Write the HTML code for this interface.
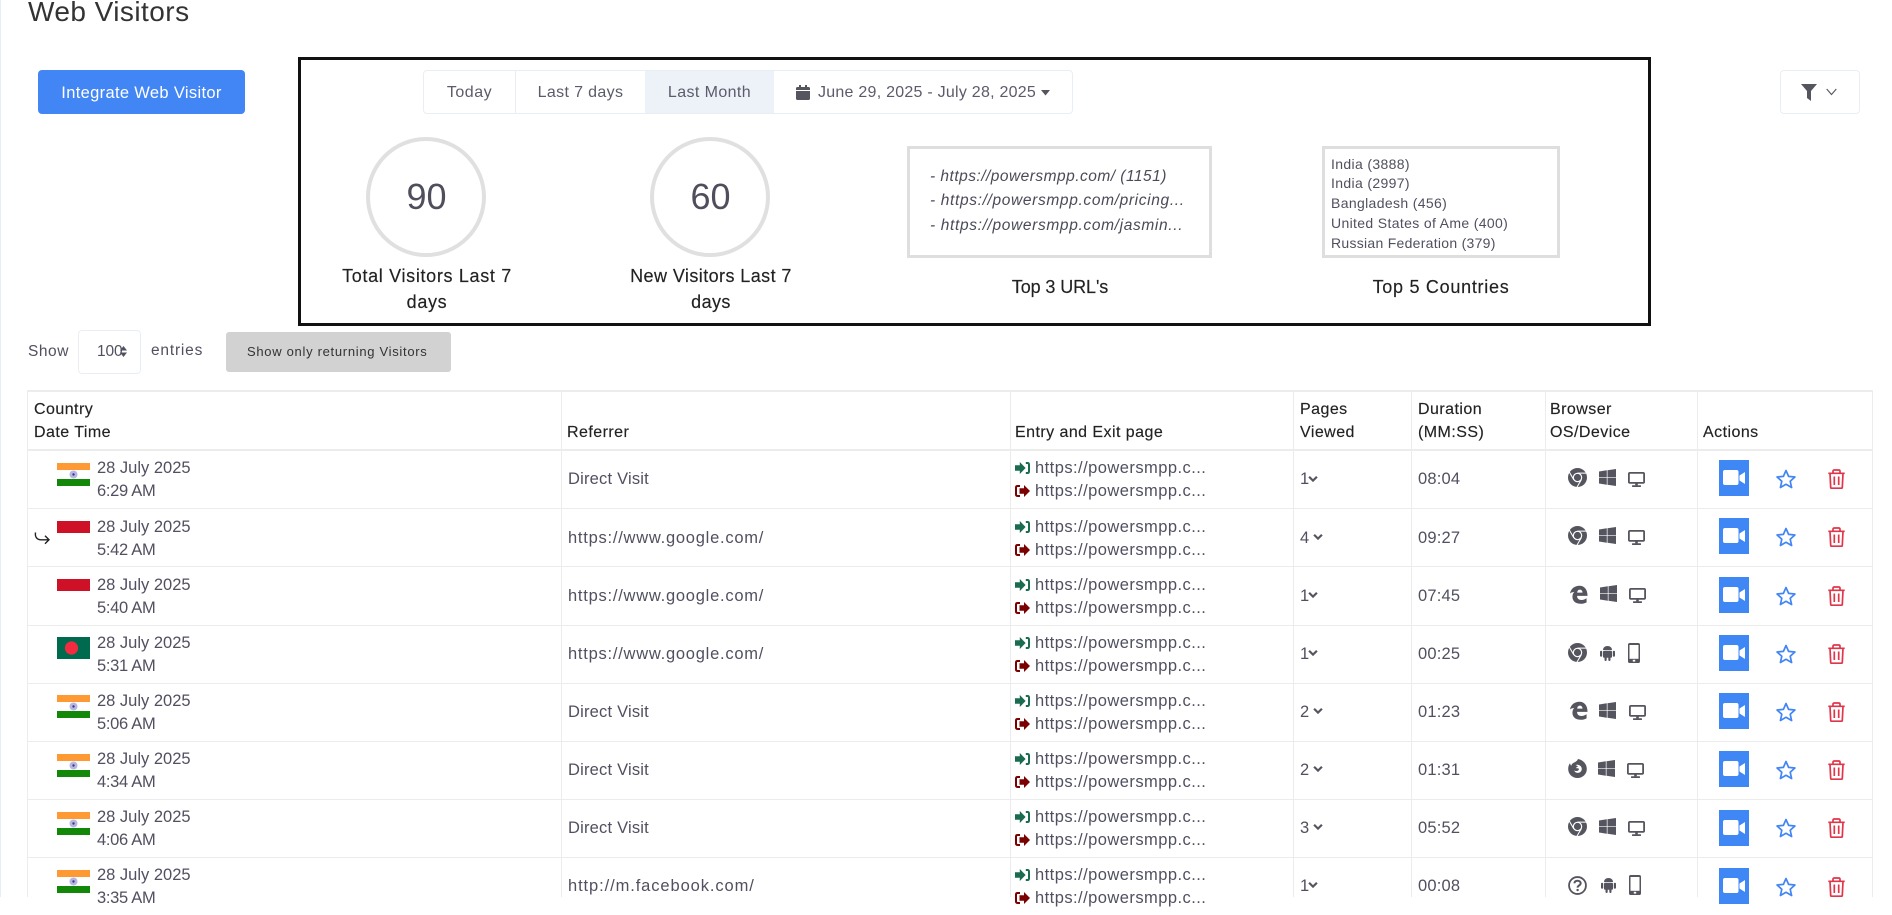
<!DOCTYPE html>
<html><head><meta charset="utf-8"><title>Web Visitors</title>
<style>
html,body{margin:0;padding:0;background:#fff}
body{width:1892px;height:897px;overflow:hidden;position:relative;font-family:"Liberation Sans",sans-serif;color:#505060}
.a{position:absolute;white-space:nowrap}
.l{position:absolute;background:#ececec}
.row{position:absolute;left:0;width:1892px;height:58px}
.row>*{position:absolute}
.t{height:20px;line-height:20px;font-size:16.5px;white-space:nowrap}
.d{left:97px;top:8px;letter-spacing:0}
.tm{left:97px;top:31px;letter-spacing:-.3px}
.u{left:1035px;letter-spacing:.45px}
.u1{top:8px}
.u2{top:31px}
.ref{left:568px;top:19px;letter-spacing:.75px}
.dv{letter-spacing:.2px}
.pg{left:1300px;top:19px;letter-spacing:0}
.du{left:1418px;top:19px;letter-spacing:.2px}
.h{font-size:16px;height:22px;line-height:22px;color:#222;letter-spacing:.45px;-webkit-text-stroke:.15px #222}
.lb{font-size:18px;line-height:26px;height:26px;color:#222;text-align:center;-webkit-text-stroke:.15px #222}
.url{left:930px;font-size:15.5px;font-style:italic;height:20px;line-height:20px;color:#4a4a58}
.cy{left:1331px;font-size:14px;height:18px;line-height:18px;letter-spacing:.35px}
.g{top:71px;height:44px;line-height:44px;font-size:16px;text-align:center;color:#5b5b6b}
.bx{position:absolute;box-sizing:border-box;border:3px solid #dedede;top:146px;height:112px}
.zb{left:1719px;top:10px;width:30px;height:36px;background:#3f87f5}
</style></head><body>
<svg width="0" height="0" style="position:absolute"><defs>
<symbol id="in" viewBox="0 0 33 23"><rect width="33" height="7" fill="#ff9933"/><rect y="16" width="33" height="7" fill="#138808"/><circle cx="16.5" cy="11.5" r="4" fill="#b6b6e0"/><circle cx="16.5" cy="11.5" r="1.2" fill="#3a3a90"/></symbol>
<symbol id="id" viewBox="0 0 33 12"><rect width="33" height="12" fill="#ce1126"/></symbol>
<symbol id="bd" viewBox="0 0 33 22"><rect width="33" height="22" fill="#006a4e"/><circle cx="14.5" cy="11" r="6.6" fill="#f42a41"/></symbol>
<symbol id="chrome" viewBox="0 0 20 20"><circle cx="10" cy="10" r="10" fill="#55555f"/><circle cx="10" cy="10" r="4.4" fill="none" stroke="#fff" stroke-width="1.2"/><g stroke="#fff" stroke-width="1.1" fill="none"><path d="M10 5.4H19.6"/><path d="M10 5.4H19.6" transform="rotate(120 10 10)"/><path d="M10 5.4H19.6" transform="rotate(240 10 10)"/></g></symbol>
<symbol id="win" viewBox="0 0 17 17"><g fill="#55555f"><path d="M0 2.500 7.800 1.300V8.100H0z"/><path d="M8.500 1.200 17 0V8.100H8.500z"/><path d="M0 8.800H7.800V15.700L0 14.500z"/><path d="M8.500 8.800H17V17L8.500 15.800z"/></g></symbol>
<symbol id="mon" viewBox="0 0 17 15"><rect x=".9" y=".9" width="15.2" height="10" rx="1" fill="none" stroke="#55555f" stroke-width="1.800"/><rect x="7.200" y="11" width="2.600" height="2.400" fill="#55555f"/><rect x="4" y="13.200" width="9" height="1.800" rx=".5" fill="#55555f"/></symbol>
<symbol id="edge" viewBox="0 0 20 20"><path fill-rule="evenodd" fill="#55555f" d="M1 9C2 3.500 6.500.8 11 .8 16 .8 19.500 4.500 19.500 11.500H8.500C8.500 14.500 10.500 15.800 13 15.800 15.200 15.800 17 15 18.500 14V18.300C16.500 19.300 14.500 19.800 12.300 19.800 7 19.800 3.600 16.800 3.600 12.500 3.600 10.500 4.200 8.800 5.500 7.300 3.800 7.500 2.300 8 1 9ZM8.600 8H14.200C14.200 5.800 12.800 4.900 11.300 4.900 9.800 4.900 8.800 6 8.600 8Z"/></symbol>
<symbol id="fx" viewBox="0 0 20 20"><path fill="#55555f" d="M10.500 0C15.800 1 19.800 5.200 19.800 10.500 19.800 16 15.300 20 10 20 4.700 20 .2 16 .2 10.500 .2 8.500 .7 6.300 2 4.500L3.200 7.200C3.800 5.600 5 4.200 6.800 3.500 8.600 2.800 9.800 1.800 10.500 0Z"/><path fill="#fff" d="M8 6.300C10.600 5.300 13.800 6.800 14.400 9.500 15 12.500 12.800 14.800 10 14.600 8.200 14.500 6.900 13.400 6.400 12 7.800 13 10 12.900 11 11.800 11.900 10.800 11.500 9.800 10.300 9.700L8.200 9.600C8.800 8.600 9.600 8.200 10.500 8.100 9.900 7.300 9 6.700 8 6.300Z"/></symbol>
<symbol id="q" viewBox="0 0 20 20"><circle cx="10" cy="10" r="8.900" fill="none" stroke="#55555f" stroke-width="1.900"/><path d="M6.700 7.700C6.900 5.800 8.300 5 10 5 11.900 5 13.300 6.100 13.300 7.700 13.300 9.900 10.100 10 10.100 12.200" fill="none" stroke="#55555f" stroke-width="2.100"/><circle cx="10.100" cy="14.800" r="1.300" fill="#55555f"/></symbol>
<symbol id="and" viewBox="0 0 15 16"><g fill="#55555f"><path d="M3 5C3 2.500 5 1 7.500 1 10 1 12 2.500 12 5z"/><rect x="3" y="5.700" width="9" height="7" rx="1"/><rect x="0" y="5.700" width="2.200" height="6" rx="1.100"/><rect x="12.800" y="5.700" width="2.200" height="6" rx="1.100"/><rect x="4.500" y="12" width="2.200" height="4" rx="1.100"/><rect x="8.300" y="12" width="2.200" height="4" rx="1.100"/></g></symbol>
<symbol id="ph" viewBox="0 0 12 20"><rect x="0" y="0" width="12" height="20" rx="1.800" fill="#55555f"/><rect x="1.500" y="2" width="9" height="13.800" fill="#fff"/><rect x="4.800" y="16.800" width="2.400" height="1.800" fill="#fff"/></symbol>
<symbol id="sin" viewBox="0 0 15 12"><path fill="#1a6b4f" d="M0 3.200H4.800V0L10.600 6 4.800 12V8.800H0z"/><path d="M10.800 1H12.400Q14 1 14 2.600V9.400Q14 11 12.400 11H10.800" fill="none" stroke="#1a6b4f" stroke-width="2"/></symbol>
<symbol id="sout" viewBox="0 0 15 12"><path d="M5 1H2.600Q1 1 1 2.600V9.400Q1 11 2.600 11H5" fill="none" stroke="#7b0000" stroke-width="2"/><path fill="#7b0000" d="M4.500 3.200H9V0L15 6 9 12V8.800H4.500z"/></symbol>
<symbol id="cam" viewBox="0 0 30 36"><rect x="4" y="10" width="15.500" height="15" rx="2" fill="#fff"/><path d="M20.500 15.500 26 12V24L20.500 20.500z" fill="#fff"/></symbol>
<symbol id="star" viewBox="0 0 20 20"><path d="M10 1.500 12.600 7.400 18.900 8 14.200 12.200 15.600 18.500 10 15.300 4.400 18.500 5.800 12.200 1.100 8 7.400 7.400z" fill="none" stroke="#4285f4" stroke-width="1.700" stroke-linejoin="round"/></symbol>
<symbol id="tr" viewBox="0 0 17 20"><g fill="none" stroke="#e0364a" stroke-width="1.700"><path d="M.3 4.300H16.700"/><path d="M5 4V2.300Q5 1 6.300 1H10.700Q12 1 12 2.300V4"/><path d="M2 4.300 2.700 18.500Q2.700 19.200 3.500 19.200H13.500Q14.300 19.200 14.300 18.500L15 4.300"/><path d="M6.300 7.500V16M10.700 7.500V16"/></g></symbol>
<symbol id="ch" viewBox="0 0 11 8"><path d="M1.200 1.500 5.500 5.800 9.800 1.500" fill="none" stroke="#55555f" stroke-width="2.400"/></symbol>
</defs></svg>

<div class="l" style="left:0;top:0;width:1px;height:897px;background:#e6edf7"></div>
<div class="a" style="left:28px;top:-2px;height:27px;line-height:27px;font-size:28px;letter-spacing:.45px;color:#333">Web Visitors</div>

<div class="a" style="left:38px;top:70px;width:207px;height:44px;background:#4285f4;border-radius:4px;color:#fff;font-size:16.5px;line-height:46px;text-align:center;letter-spacing:.33px">Integrate Web Visitor</div>

<div class="a" style="left:298px;top:57px;width:1353px;height:269px;box-sizing:border-box;border:3px solid #111"></div>

<div class="a" style="left:423px;top:70px;width:650px;height:44px;box-sizing:border-box;border:1px solid #e9eef5;border-radius:4px"></div>
<div class="a g" style="left:424px;width:91px;letter-spacing:.5px">Today</div>
<div class="a" style="left:515px;top:71px;width:1px;height:42px;background:#e9eef5"></div>
<div class="a g" style="left:516px;width:129px;letter-spacing:.35px">Last 7 days</div>
<div class="a" style="left:645px;top:71px;height:42px;width:129px;background:#edf2f9"></div>
<div class="a g" style="left:645px;width:129px;letter-spacing:.4px">Last Month</div>
<svg class="a" style="left:796px;top:85px" width="14" height="15" viewBox="0 0 14 15"><path fill="#55555f" d="M3 0H5V2H9V0H11V2H12.500Q14 2 14 3.500V5H0V3.500Q0 2 1.500 2H3zM0 6H14V13.500Q14 15 12.500 15H1.500Q0 15 0 13.500z"/></svg>
<div class="a g" style="left:818px;letter-spacing:.25px">June 29, 2025 - July 28, 2025</div>
<svg class="a" style="left:1041px;top:90px" width="9" height="6" viewBox="0 0 9 6"><path d="M0 0H9L4.500 5.500z" fill="#55555f"/></svg>

<div class="a" style="left:366px;top:137px;width:120px;height:120px;box-sizing:border-box;border:4px solid #e0e0e0;border-radius:50%;text-align:center;text-indent:1px;line-height:112px;font-size:36px;color:#4e4e5c">90</div>
<div class="a lb" style="left:297px;width:260px;top:263px;letter-spacing:.67px">Total Visitors Last 7</div>
<div class="a lb" style="left:297px;width:260px;top:289px;letter-spacing:.67px">days</div>
<div class="a" style="left:650px;top:137px;width:120px;height:120px;box-sizing:border-box;border:4px solid #e0e0e0;border-radius:50%;text-align:center;text-indent:1px;line-height:112px;font-size:36px;color:#4e4e5c">60</div>
<div class="a lb" style="left:581px;width:260px;top:263px;letter-spacing:.42px">New Visitors Last 7</div>
<div class="a lb" style="left:581px;width:260px;top:289px;letter-spacing:.42px">days</div>

<div class="bx" style="left:907px;width:305px"></div>
<div class="a url" style="top:167px;letter-spacing:.48px">- https://powersmpp.com/ (1151)</div>
<div class="a url" style="top:191px;letter-spacing:.65px">- https://powersmpp.com/pricing...</div>
<div class="a url" style="top:216px;letter-spacing:.65px">- https://powersmpp.com/jasmin...</div>
<div class="a lb" style="left:930px;width:260px;top:274px;letter-spacing:-.1px">Top 3 URL's</div>

<div class="bx" style="left:1322px;width:238px"></div>
<div class="a cy" style="top:155px">India (3888)</div>
<div class="a cy" style="top:174px">India (2997)</div>
<div class="a cy" style="top:194px">Bangladesh (456)</div>
<div class="a cy" style="top:214px">United States of Ame (400)</div>
<div class="a cy" style="top:234px;letter-spacing:.28px">Russian Federation (379)</div>
<div class="a lb" style="left:1311px;width:260px;top:274px;letter-spacing:.72px">Top 5 Countries</div>

<div class="a" style="left:1780px;top:70px;width:80px;height:44px;box-sizing:border-box;border:1px solid #e9eef5;border-radius:4px"></div>
<svg class="a" style="left:1801px;top:84px" width="16" height="17" viewBox="0 0 16 17"><path d="M0 0H16L10 7V17L6 14V7z" fill="#55555f"/></svg>
<svg class="a" style="left:1826px;top:88px" width="11" height="8" viewBox="0 0 11 8"><path d="M.7 1 5.500 6.500 10.300 1" fill="none" stroke="#55555f" stroke-width="1.100"/></svg>

<div class="a t" style="left:28px;top:342px;font-size:15.5px;letter-spacing:.55px">Show</div>
<div class="a" style="left:78px;top:330px;width:63px;height:44px;box-sizing:border-box;border:1px solid #e9eef5;border-radius:4px"></div>
<div class="a t" style="left:97px;top:342px;font-size:15.5px;letter-spacing:-.1px">100</div>
<svg class="a" style="left:120px;top:346px" width="7" height="11" viewBox="0 0 7 11"><path d="M3.500 0 7 4.500H0zM0 6.500H7L3.500 11z" fill="#505060"/></svg>
<div class="a t" style="left:151px;top:341px;font-size:15.5px;letter-spacing:.8px">entries</div>
<div class="a" style="left:226px;top:332px;width:225px;height:40px;background:#d2d2d2;border-radius:3px;font-size:13px;line-height:39px;color:#333;letter-spacing:.7px;text-indent:21px">Show only returning Visitors</div>

<div class="l" style="left:27px;top:390px;width:1846px;height:2px"></div>
<div class="l" style="left:27px;top:449px;width:1846px;height:2px"></div>
<div class="l" style="left:27px;top:508px;width:1846px;height:1px"></div>
<div class="l" style="left:27px;top:566px;width:1846px;height:1px"></div>
<div class="l" style="left:27px;top:625px;width:1846px;height:1px"></div>
<div class="l" style="left:27px;top:683px;width:1846px;height:1px"></div>
<div class="l" style="left:27px;top:741px;width:1846px;height:1px"></div>
<div class="l" style="left:27px;top:799px;width:1846px;height:1px"></div>
<div class="l" style="left:27px;top:857px;width:1846px;height:1px"></div>
<div class="l" style="left:27px;top:390px;width:1px;height:507px"></div>
<div class="l" style="left:561px;top:390px;width:1px;height:507px"></div>
<div class="l" style="left:1010px;top:390px;width:1px;height:507px"></div>
<div class="l" style="left:1293px;top:390px;width:1px;height:507px"></div>
<div class="l" style="left:1411px;top:390px;width:1px;height:507px"></div>
<div class="l" style="left:1545px;top:390px;width:1px;height:507px"></div>
<div class="l" style="left:1697px;top:390px;width:1px;height:507px"></div>
<div class="l" style="left:1872px;top:390px;width:1px;height:507px"></div>

<div class="a h" style="left:34px;top:399px">Country</div>
<div class="a h" style="left:34px;top:422px">Date Time</div>
<div class="a h" style="left:567px;top:422px">Referrer</div>
<div class="a h" style="left:1015px;top:422px">Entry and Exit page</div>
<div class="a h" style="left:1300px;top:399px">Pages</div>
<div class="a h" style="left:1300px;top:422px">Viewed</div>
<div class="a h" style="left:1418px;top:399px">Duration</div>
<div class="a h" style="left:1418px;top:422px">(MM:SS)</div>
<div class="a h" style="left:1550px;top:399px">Browser</div>
<div class="a h" style="left:1550px;top:422px">OS/Device</div>
<div class="a h" style="left:1703px;top:422px">Actions</div>

<div class="row" style="top:450px">
<svg style="left:57px;top:12.500px" width="33" height="23"><use href="#in"/></svg>
<div class="t d">28 July 2025</div><div class="t tm">6:29 AM</div>
<div class="t ref dv">Direct Visit</div>
<svg style="left:1015px;top:12px" width="15" height="12"><use href="#sin"/></svg><div class="t u u1">https://powersmpp.c...</div>
<svg style="left:1015px;top:35px" width="15" height="12"><use href="#sout"/></svg><div class="t u u2">https://powersmpp.c...</div>
<div class="t pg">1</div><svg style="left:1308px;top:25px" width="10" height="8"><use href="#ch"/></svg>
<div class="t du">08:04</div>
<svg style="left:1567.500px;top:18px" width="19" height="19"><use href="#chrome"/></svg><svg style="left:1599px;top:19px" width="17" height="17"><use href="#win"/></svg><svg style="left:1628px;top:22px" width="17" height="15"><use href="#mon"/></svg>
<div class="zb"><svg width="30" height="36"><use href="#cam"/></svg></div>
<svg style="left:1776px;top:19px" width="20" height="20"><use href="#star"/></svg><svg style="left:1828px;top:19px" width="17" height="20"><use href="#tr"/></svg>
</div>

<div class="row" style="top:509px">
<svg style="left:34px;top:23px" width="16" height="13" viewBox="0 0 16 13"><path d="M1.500.5C.8 5 3 7.800 7 7.800H15M11 3.800 15 7.800 11 11.800" fill="none" stroke="#222" stroke-width="1.400"/></svg>
<svg style="left:57px;top:12px" width="33" height="12"><use href="#id"/></svg>
<div class="t d">28 July 2025</div><div class="t tm">5:42 AM</div>
<div class="t ref">https://www.google.com/</div>
<svg style="left:1015px;top:12px" width="15" height="12"><use href="#sin"/></svg><div class="t u u1">https://powersmpp.c...</div>
<svg style="left:1015px;top:35px" width="15" height="12"><use href="#sout"/></svg><div class="t u u2">https://powersmpp.c...</div>
<div class="t pg">4</div><svg style="left:1313px;top:24px" width="10" height="8"><use href="#ch"/></svg>
<div class="t du">09:27</div>
<svg style="left:1567.500px;top:17px" width="19" height="19"><use href="#chrome"/></svg><svg style="left:1599px;top:18px" width="17" height="17"><use href="#win"/></svg><svg style="left:1628px;top:21px" width="17" height="15"><use href="#mon"/></svg>
<div class="zb" style="top:9px"><svg width="30" height="36"><use href="#cam"/></svg></div>
<svg style="left:1776px;top:18px" width="20" height="20"><use href="#star"/></svg><svg style="left:1828px;top:18px" width="17" height="20"><use href="#tr"/></svg>
</div>

<div class="row" style="top:567px">
<svg style="left:57px;top:12px" width="33" height="12"><use href="#id"/></svg>
<div class="t d">28 July 2025</div><div class="t tm">5:40 AM</div>
<div class="t ref">https://www.google.com/</div>
<svg style="left:1015px;top:12px" width="15" height="12"><use href="#sin"/></svg><div class="t u u1">https://powersmpp.c...</div>
<svg style="left:1015px;top:35px" width="15" height="12"><use href="#sout"/></svg><div class="t u u2">https://powersmpp.c...</div>
<div class="t pg">1</div><svg style="left:1308px;top:24px" width="10" height="8"><use href="#ch"/></svg>
<div class="t du">07:45</div>
<svg style="left:1568.500px;top:18px" width="19" height="19"><use href="#edge"/></svg><svg style="left:1599.500px;top:18px" width="17" height="17"><use href="#win"/></svg><svg style="left:1628.500px;top:21px" width="17" height="15"><use href="#mon"/></svg>
<div class="zb"><svg width="30" height="36"><use href="#cam"/></svg></div>
<svg style="left:1776px;top:19px" width="20" height="20"><use href="#star"/></svg><svg style="left:1828px;top:19px" width="17" height="20"><use href="#tr"/></svg>
</div>

<div class="row" style="top:625px">
<svg style="left:57px;top:12px" width="33" height="22"><use href="#bd"/></svg>
<div class="t d">28 July 2025</div><div class="t tm">5:31 AM</div>
<div class="t ref">https://www.google.com/</div>
<svg style="left:1015px;top:12px" width="15" height="12"><use href="#sin"/></svg><div class="t u u1">https://powersmpp.c...</div>
<svg style="left:1015px;top:35px" width="15" height="12"><use href="#sout"/></svg><div class="t u u2">https://powersmpp.c...</div>
<div class="t pg">1</div><svg style="left:1308px;top:24px" width="10" height="8"><use href="#ch"/></svg>
<div class="t du">00:25</div>
<svg style="left:1567.500px;top:18px" width="19" height="19"><use href="#chrome"/></svg><svg style="left:1600px;top:20px" width="15" height="16"><use href="#and"/></svg><svg style="left:1628px;top:18px" width="12" height="20"><use href="#ph"/></svg>
<div class="zb"><svg width="30" height="36"><use href="#cam"/></svg></div>
<svg style="left:1776px;top:19px" width="20" height="20"><use href="#star"/></svg><svg style="left:1828px;top:19px" width="17" height="20"><use href="#tr"/></svg>
</div>

<div class="row" style="top:683px">
<svg style="left:57px;top:12px" width="33" height="23"><use href="#in"/></svg>
<div class="t d">28 July 2025</div><div class="t tm">5:06 AM</div>
<div class="t ref dv">Direct Visit</div>
<svg style="left:1015px;top:12px" width="15" height="12"><use href="#sin"/></svg><div class="t u u1">https://powersmpp.c...</div>
<svg style="left:1015px;top:35px" width="15" height="12"><use href="#sout"/></svg><div class="t u u2">https://powersmpp.c...</div>
<div class="t pg">2</div><svg style="left:1313px;top:24px" width="10" height="8"><use href="#ch"/></svg>
<div class="t du">01:23</div>
<svg style="left:1568.500px;top:18px" width="19" height="19"><use href="#edge"/></svg><svg style="left:1599px;top:19px" width="17" height="17"><use href="#win"/></svg><svg style="left:1628.500px;top:22px" width="17" height="15"><use href="#mon"/></svg>
<div class="zb"><svg width="30" height="36"><use href="#cam"/></svg></div>
<svg style="left:1776px;top:19px" width="20" height="20"><use href="#star"/></svg><svg style="left:1828px;top:19px" width="17" height="20"><use href="#tr"/></svg>
</div>

<div class="row" style="top:741px">
<svg style="left:57px;top:12.500px" width="33" height="23"><use href="#in"/></svg>
<div class="t d">28 July 2025</div><div class="t tm">4:34 AM</div>
<div class="t ref dv">Direct Visit</div>
<svg style="left:1015px;top:12px" width="15" height="12"><use href="#sin"/></svg><div class="t u u1">https://powersmpp.c...</div>
<svg style="left:1015px;top:35px" width="15" height="12"><use href="#sout"/></svg><div class="t u u2">https://powersmpp.c...</div>
<div class="t pg">2</div><svg style="left:1313px;top:24px" width="10" height="8"><use href="#ch"/></svg>
<div class="t du">01:31</div>
<svg style="left:1568px;top:18px" width="19" height="19"><use href="#fx"/></svg><svg style="left:1598px;top:19px" width="17" height="17"><use href="#win"/></svg><svg style="left:1627px;top:22px" width="17" height="15"><use href="#mon"/></svg>
<div class="zb"><svg width="30" height="36"><use href="#cam"/></svg></div>
<svg style="left:1776px;top:19px" width="20" height="20"><use href="#star"/></svg><svg style="left:1828px;top:19px" width="17" height="20"><use href="#tr"/></svg>
</div>

<div class="row" style="top:799px">
<svg style="left:57px;top:13px" width="33" height="23"><use href="#in"/></svg>
<div class="t d">28 July 2025</div><div class="t tm">4:06 AM</div>
<div class="t ref dv">Direct Visit</div>
<svg style="left:1015px;top:12px" width="15" height="12"><use href="#sin"/></svg><div class="t u u1">https://powersmpp.c...</div>
<svg style="left:1015px;top:35px" width="15" height="12"><use href="#sout"/></svg><div class="t u u2">https://powersmpp.c...</div>
<div class="t pg">3</div><svg style="left:1313px;top:24px" width="10" height="8"><use href="#ch"/></svg>
<div class="t du">05:52</div>
<svg style="left:1567.500px;top:18px" width="19" height="19"><use href="#chrome"/></svg><svg style="left:1599px;top:19px" width="17" height="17"><use href="#win"/></svg><svg style="left:1628px;top:22px" width="17" height="15"><use href="#mon"/></svg>
<div class="zb" style="top:11px"><svg width="30" height="36"><use href="#cam"/></svg></div>
<svg style="left:1776px;top:19px" width="20" height="20"><use href="#star"/></svg><svg style="left:1828px;top:19px" width="17" height="20"><use href="#tr"/></svg>
</div>

<div class="row" style="top:857px">
<svg style="left:57px;top:13px" width="33" height="23"><use href="#in"/></svg>
<div class="t d">28 July 2025</div><div class="t tm">3:35 AM</div>
<div class="t ref" style="letter-spacing:.9px">http://m.facebook.com/</div>
<svg style="left:1015px;top:12px" width="15" height="12"><use href="#sin"/></svg><div class="t u u1">https://powersmpp.c...</div>
<svg style="left:1015px;top:35px" width="15" height="12"><use href="#sout"/></svg><div class="t u u2">https://powersmpp.c...</div>
<div class="t pg">1</div><svg style="left:1308px;top:24px" width="10" height="8"><use href="#ch"/></svg>
<div class="t du">00:08</div>
<svg style="left:1568px;top:19px" width="19" height="19"><use href="#q"/></svg><svg style="left:1600.500px;top:20px" width="15" height="16"><use href="#and"/></svg><svg style="left:1628.500px;top:18px" width="12" height="20"><use href="#ph"/></svg>
<div class="zb" style="top:11px"><svg width="30" height="36"><use href="#cam"/></svg></div>
<svg style="left:1776px;top:20px" width="20" height="20"><use href="#star"/></svg><svg style="left:1828px;top:20px" width="17" height="20"><use href="#tr"/></svg>
</div>
</body></html>
